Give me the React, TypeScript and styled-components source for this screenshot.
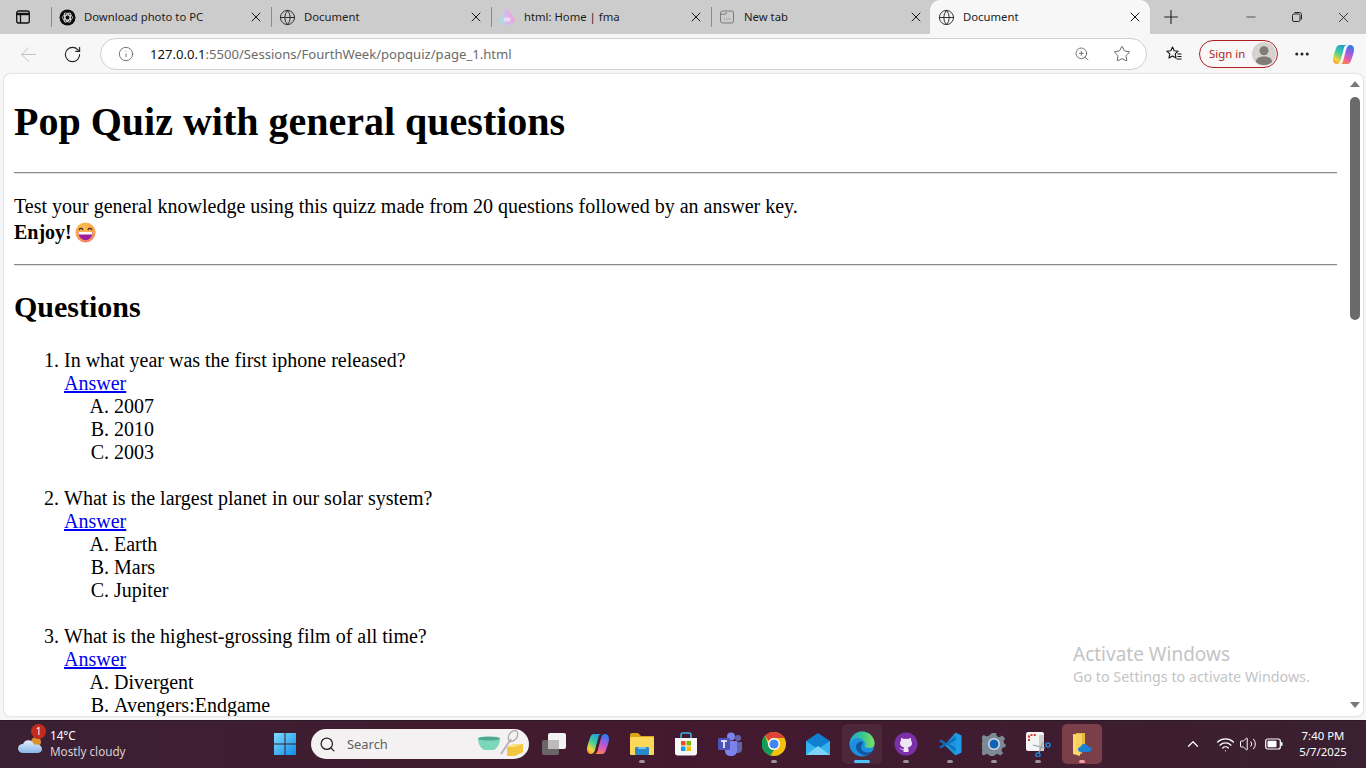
import { ReactNode } from "react";
import styled, { createGlobalStyle } from "styled-components";
import { ArrowLeft, ChevronUp, Globe, Minus, Plus, RotateCw, Search, Star, Volume2, Wifi, X, ZoomIn, Info, Ellipsis } from "lucide-react";

const GlobalStyle = createGlobalStyle`
  html, body { margin: 0; padding: 0; height: 100%; overflow: hidden; }
  body { font-family: "Noto Sans", "Open Sans", sans-serif; }
`;

const Shell = styled.div`
  width: 1366px;
  height: 768px;
  display: flex;
  flex-direction: column;
  overflow: hidden;
  background: #f7f7f7;
`;

const TabStrip = styled.div`
  height: 34px;
  flex: none;
  display: flex;
  align-items: stretch;
  background: #cccccc;
`;

const SidebarButton = styled.div`
  width: 51px;
  display: flex;
  align-items: center;
  justify-content: center;
  padding-right: 5px;
  box-sizing: border-box;
`;

const Tab = styled.div<{ $active?: boolean }>`
  width: 220px;
  height: 34px;
  box-sizing: border-box;
  position: relative;
  display: flex;
  align-items: center;
  padding: 0 7px 0 7px;
  gap: 8px;
  font-size: 11.3px;
  color: #1c1c1c;
  margin-left: ${(p) => (p.$active ? "-1px" : "0")};
  background: ${(p) => (p.$active ? "#f7f7f7" : "transparent")};
  border-radius: ${(p) => (p.$active ? "10px 10px 0 0" : "0")};
  &::before {
    content: "";
    display: ${(p) => (p.$active ? "none" : "block")};
    position: absolute;
    left: 0;
    top: 7px;
    height: 20px;
    width: 1px;
    background: #8a8a8a;
  }
`;

const TabIcon = styled.span`
  width: 18px;
  height: 18px;
  flex: none;
  display: flex;
  align-items: center;
  justify-content: center;
`;

const TabTitle = styled.span`
  flex: 1;
  white-space: nowrap;
  overflow: hidden;
  margin-bottom: 2px;
`;

const TabClose = styled(X)`
  flex: none;
  color: #1a1a1a;
`;

const NewTabButton = styled.div`
  width: 42px;
  display: flex;
  align-items: center;
  justify-content: center;
`;

const WindowControls = styled.div`
  margin-left: auto;
  display: flex;
  align-items: center;
`;

const WindowButton = styled.div`
  width: 46px;
  height: 34px;
  display: flex;
  align-items: center;
  justify-content: center;
  color: #222;
`;

const Toolbar = styled.div`
  height: 40px;
  flex: none;
  display: flex;
  align-items: center;
  background: #f7f7f7;
`;

const ToolButton = styled.div<{ $w: number }>`
  width: ${(p) => p.$w}px;
  flex: none;
  display: flex;
  align-items: center;
  justify-content: center;
`;

const AddressBar = styled.div`
  width: 1047px;
  height: 32px;
  box-sizing: border-box;
  flex: none;
  display: flex;
  align-items: center;
  background: #fff;
  border: 1px solid #cfcfcf;
  border-radius: 16px;
  padding: 0 4px 0 17px;
  margin: 0 9px 0 12px;
`;

const Url = styled.div`
  margin-left: 16px;
  flex: 1;
  font-size: 13.1px;
  color: #6b6b6b;
  white-space: nowrap;
`;

const Host = styled.span`
  color: #111;
`;

const BarAction = styled.div`
  width: 40px;
  display: flex;
  justify-content: center;
  color: #555;
`;

const SignIn = styled.div`
  width: 79px;
  height: 28px;
  box-sizing: border-box;
  flex: none;
  margin-left: 7px;
  display: flex;
  align-items: center;
  justify-content: space-between;
  padding: 0 1px 0 9px;
  border: 1px solid #b01e23;
  border-radius: 14px;
  color: #b01e23;
  font-size: 11.4px;
`;

const SignInLabel = styled.span`
  margin-bottom: 2px;
`;

const Frame = styled.div`
  flex: 1;
  min-height: 0;
  padding: 0 3px 4px 4px;
`;

const Card = styled.div`
  position: relative;
  height: 100%;
  display: flex;
  overflow: hidden;
  background: #fff;
  border-radius: 6px;
  box-shadow: 0 0 2px rgba(0, 0, 0, 0.28);
`;

const Page = styled.main`
  flex: 1;
  min-width: 0;
  overflow: hidden;
  padding: 0 10px;
  font-family: "Liberation Serif", "Times New Roman", serif;
  font-size: 20px;
  line-height: 23px;
  color: #000;
`;

const Title = styled.h1`
  margin: 25px 0 27px;
  font-size: 40px;
  line-height: 46px;
  font-weight: 700;
`;

const Rule = styled.hr`
  margin: 0;
  border: none;
  border-top: 1px solid #8a8a8a;
  border-bottom: 1px solid #e2e2e2;
`;

const Intro = styled.p`
  margin: 21px 0 20px;
`;

const EnjoyLine = styled.span`
  display: block;
  margin-top: 3px;
`;

const Emoji = styled.svg`
  width: 21px;
  height: 21px;
  vertical-align: -4px;
  margin-left: 3px;
`;

const Section = styled.h2`
  margin: 24px 0 25px;
  font-size: 30px;
  line-height: 34px;
  font-weight: 700;
`;

const Questions = styled.ol`
  margin: 0;
  padding-left: 50px;
`;

const Question = styled.li`
  margin-bottom: 23px;
`;

const AnswerLink = styled.a`
  display: block;
  color: #0000ee;
  text-decoration: underline;
`;

const Options = styled.ol`
  margin: 0;
  padding-left: 50px;
  list-style-type: upper-alpha;
`;

const ScrollBar = styled.div`
  width: 16px;
  flex: none;
  position: relative;
  display: flex;
  flex-direction: column;
  align-items: center;
  justify-content: space-between;
  padding: 7px 0 8px;
  box-sizing: border-box;
`;

const ScrollThumb = styled.div`
  position: absolute;
  top: 23px;
  left: 3px;
  width: 10px;
  height: 223px;
  border-radius: 5px;
  background: #6a6a6a;
`;

const ScrollArrow = styled.div<{ $down?: boolean }>`
  width: 0;
  height: 0;
  border-left: 5px solid transparent;
  border-right: 5px solid transparent;
  border-bottom: ${(p) => (p.$down ? "0" : "6px solid #7a7a7a")};
  border-top: ${(p) => (p.$down ? "6px solid #7a7a7a" : "0")};
`;

const Watermark = styled.div`
  position: absolute;
  left: 1069px;
  top: 567px;
  color: #c4c4c4;
  font-size: 14.3px;
  line-height: 20px;
  white-space: nowrap;
`;

const WatermarkTitle = styled.div`
  font-size: 19px;
  line-height: 26px;
`;

const Taskbar = styled.footer`
  height: 48px;
  flex: none;
  display: flex;
  align-items: center;
  padding-bottom: 1px;
  background: linear-gradient(90deg, #3b2033 0%, #44192f 50%, #3a2031 100%);
  border-top: 1px solid #2c1a27;
  box-sizing: border-box;
`;

const Weather = styled.div`
  width: 263px;
  flex: none;
  display: flex;
  align-items: center;
  padding-left: 17px;
  box-sizing: border-box;
  position: relative;
`;

const Badge = styled.span`
  position: absolute;
  left: 31px;
  top: -3px;
  width: 15px;
  height: 15px;
  border-radius: 50%;
  background: #c42b1c;
  color: #fff;
  font-size: 10px;
  line-height: 15px;
  text-align: center;
`;

const WeatherText = styled.div`
  margin: 0 0 2px 7px;
  font-size: 11.7px;
  line-height: 16px;
  color: #d8d0d5;
`;

const Temperature = styled.div`
  color: #fff;
`;

const TaskIcon = styled.div<{ $open?: "idle" | "focus" | "active" }>`
  width: 40px;
  height: 40px;
  margin: 0 2px;
  flex: none;
  position: relative;
  display: flex;
  align-items: center;
  justify-content: center;
  border-radius: 5px;
  background: ${(p) => (p.$open === "active" ? "#7a3f48" : p.$open === "focus" ? "rgba(255,255,255,0.06)" : "transparent")};
  &::after {
    content: "";
    display: ${(p) => (p.$open ? "block" : "none")};
    position: absolute;
    bottom: 1px;
    left: 50%;
    height: 3px;
    border-radius: 2px;
    transform: translateX(-50%);
    width: ${(p) => (p.$open === "focus" ? "16px" : "6px")};
    background: ${(p) => (p.$open === "focus" ? "#4cc2ff" : p.$open === "active" ? "#f09aa4" : "#9a9297")};
  }
`;

const SearchBox = styled.div`
  width: 218px;
  height: 30px;
  flex: none;
  margin: 0 3px 0 4px;
  box-sizing: border-box;
  display: flex;
  align-items: center;
  gap: 11px;
  padding: 0 4px 0 8px;
  background: #f4f1f2;
  border-radius: 15px;
  color: #5f5f5f;
  font-size: 12.9px;
`;

const SearchLabel = styled.span`
  flex: 1;
`;

const Tray = styled.div`
  margin-left: auto;
  display: flex;
  align-items: center;
  color: #fff;
`;

const TrayIcon = styled.div<{ $w: number; $after?: number }>`
  width: ${(p) => p.$w}px;
  margin-right: ${(p) => p.$after ?? 0}px;
  display: flex;
  justify-content: center;
`;

const Clock = styled.div`
  width: 68px;
  margin: 0 9px 1px 0;
  text-align: center;
  font-size: 11.4px;
  line-height: 16px;
  color: #fff;
`;

const Copilot = ({ size, id }: { size: number; id: string }) => (
  <svg width={size} height={size} viewBox="0 0 24 24">
    <defs>
      <linearGradient id={`${id}L`} x1="0.7" y1="0" x2="0.2" y2="1">
        <stop offset="0" stopColor="#1f9be0" />
        <stop offset="0.45" stopColor="#3fcf9a" />
        <stop offset="0.8" stopColor="#f5d53a" />
        <stop offset="1" stopColor="#f59a3a" />
      </linearGradient>
      <linearGradient id={`${id}R`} x1="0.7" y1="0" x2="0.3" y2="1">
        <stop offset="0" stopColor="#2a7fe8" />
        <stop offset="0.4" stopColor="#a05ae0" />
        <stop offset="0.75" stopColor="#ee5fa0" />
        <stop offset="1" stopColor="#f58a3a" />
      </linearGradient>
    </defs>
    <path d="M8 2h8c-2 0-3 1-3.500 3L9 18c-.6 2-2 4-4 4-2.500 0-4-2-4-5 0-3 2-8 3-11 .7-2.500 2-4 4-4z" fill={`url(#${id}L)`} />
    <path d="M16 22H8c2 0 3-1 3.500-3L15 6c.6-2 2-4 4-4 2.500 0 4 2 4 5 0 3-2 8-3 11-.7 2.500-2 4-4 4z" fill={`url(#${id}R)`} />
  </svg>
);

const SidebarGlyph = () => (
  <svg width="16" height="16" viewBox="0 0 16 16" fill="none" stroke="#111" strokeWidth="1.3">
    <rect x="1.700" y="2" width="12.600" height="12" rx="2" />
    <path d="M1.700 5h12.600" strokeWidth="2.400" />
    <path d="M5.500 5v9" />
  </svg>
);

const GptGlyph = () => (
  <svg width="17" height="17" viewBox="0 0 17 17" fill="none">
    <circle cx="8.500" cy="8.500" r="8" fill="#0d0d0d" />
    <g stroke="#e8e8e8" strokeWidth="0.9">
      <ellipse cx="8.500" cy="8.500" rx="5" ry="2.500" />
      <ellipse cx="8.500" cy="8.500" rx="5" ry="2.500" transform="rotate(60 8.500 8.500)" />
      <ellipse cx="8.500" cy="8.500" rx="5" ry="2.500" transform="rotate(120 8.500 8.500)" />
    </g>
  </svg>
);

const FmaGlyph = () => (
  <svg width="18" height="18" viewBox="0 0 18 18">
    <defs>
      <linearGradient id="fma" x1="0" y1="0.6" x2="1" y2="0.4">
        <stop offset="0" stopColor="#9fe3e6" />
        <stop offset="0.5" stopColor="#dcb6ea" />
        <stop offset="1" stopColor="#f3a0dc" />
      </linearGradient>
    </defs>
    <path d="M9 1c1.500 0 2.500 2 3.500 4.500 1.500 2 4 4 4.500 6.500 0 3-3.500 5-8 5s-8-2-8-5c.5-2.500 3-4.500 4.500-6.500C6.500 3 7.500 1 9 1z" fill="url(#fma)" />
    <rect x="5.500" y="9.500" width="7" height="4" rx="1.500" fill="#eadcf2" />
  </svg>
);

const NewTabGlyph = () => (
  <svg width="16" height="16" viewBox="0 0 16 16" fill="none" stroke="#7c7c7c" strokeWidth="1">
    <rect x="1.500" y="2" width="13" height="12" rx="2" />
    <path d="M1.500 5.200h5l1-2.200" />
    <path d="M5 10h1M7.500 10h1M10 10h1" strokeWidth="1.200" />
  </svg>
);

const RestoreGlyph = () => (
  <svg width="12" height="12" viewBox="0 0 12 12" fill="none" stroke="#222" strokeWidth="1">
    <rect x="1.500" y="3" width="7.500" height="7.500" rx="1.500" />
    <path d="M3.500 1.500h5c1.200 0 2 .8 2 2v5" />
  </svg>
);

const FavoritesGlyph = () => (
  <svg width="18" height="18" viewBox="0 0 18 18" fill="none" stroke="#111" strokeWidth="1.100" strokeLinejoin="round">
    <path d="M7.500 2l1.700 3.700 4 .5-3 2.700.8 4-3.500-2-3.500 2 .8-4-3-2.700 4-.5z" />
    <path d="M12.500 9h4M12.500 11.500h4M11.500 14h5" />
  </svg>
);

const Avatar = () => (
  <svg width="24" height="24" viewBox="0 0 24 24">
    <circle cx="12" cy="12" r="12" fill="#d6d3ce" />
    <circle cx="12" cy="8.800" r="4.500" fill="#7f7b76" />
    <path d="M4 20c0-4 3.500-5.500 8-5.500s8 1.500 8 5.500c-2 2-5 3-8 3s-6-1-8-3z" fill="#7f7b76" />
  </svg>
);

const CloudGlyph = () => (
  <svg width="26" height="22" viewBox="0 0 26 22">
    <defs>
      <linearGradient id="cloud" x1="0" y1="0" x2="0" y2="1">
        <stop offset="0" stopColor="#e2eefb" />
        <stop offset="1" stopColor="#86b6ea" />
      </linearGradient>
    </defs>
    <circle cx="19" cy="9" r="5" fill="#d9912f" />
    <path d="M6 20c-3 0-5-2-5-4.500S3 11 6 11c1-3 4-4.500 7-3.500 2.500.8 3.500 2.500 4 4 4-.5 8 .5 8 4.500 0 2.500-2 4-5 4z" fill="url(#cloud)" />
  </svg>
);

const WinLogo = () => (
  <svg width="24" height="24" viewBox="0 0 24 24">
    <defs>
      <linearGradient id="win" x1="0" y1="0" x2="1" y2="1">
        <stop offset="0" stopColor="#7fdcff" />
        <stop offset="1" stopColor="#0f8be8" />
      </linearGradient>
    </defs>
    <path d="M1 1h10.500v10.500H1zM12.500 1H23v10.500H12.500zM1 12.500h10.500V23H1zM12.500 12.500H23V23H12.500z" fill="url(#win)" />
  </svg>
);

const SearchArt = () => (
  <svg width="48" height="30" viewBox="0 0 48 30">
    <path d="M1 9h22c0 6-3 11-6.500 12h-9C4 20 1 15 1 9z" fill="#7cd6b8" />
    <ellipse cx="12" cy="9.500" rx="11" ry="2" fill="#4fa98f" />
    <path d="M24 25L34 10" stroke="#b9b4b8" strokeWidth="2" />
    <ellipse cx="36" cy="7" rx="4" ry="6" transform="rotate(35 36 7)" fill="none" stroke="#a9a4a8" strokeWidth="1.200" />
    <path d="M30 18l8-3h8v8l-8 4h-8z" fill="#f4c53f" />
    <path d="M30 18l8-3h8l-8 3z" fill="#fbe078" />
  </svg>
);

const TaskViewGlyph = () => (
  <svg width="26" height="24" viewBox="0 0 26 24">
    <rect x="1" y="8" width="17" height="15" rx="2" fill="#6a6568" />
    <rect x="7" y="1" width="18" height="16" rx="2" fill="#f2f2f2" />
    <rect x="7" y="8" width="11" height="9" fill="#bdbabb" />
  </svg>
);

const FolderGlyph = () => (
  <svg width="24" height="22" viewBox="0 0 24 22">
    <path d="M0 2c0-1 .7-2 2-2h6l3 3h13v4H0z" fill="#d9a514" />
    <rect x="0" y="4" width="24" height="18" rx="1" fill="#fbd85a" />
    <rect x="5" y="14" width="14" height="8" rx="1" fill="#2b88c8" />
    <rect x="8" y="14" width="8" height="2" fill="#6fc0ea" />
  </svg>
);

const StoreGlyph = () => (
  <svg width="24" height="24" viewBox="0 0 24 24">
    <path d="M7 6V3c0-1 .6-2 2-2h6c1.400 0 2 1 2 2v3" fill="none" stroke="#35b6e8" strokeWidth="1.600" />
    <path d="M1 6h22v15c0 1.500-1 2.500-2.500 2.500h-17C2 23.500 1 22.500 1 21z" fill="#f7f7f7" />
    <rect x="7" y="9" width="4.500" height="4.500" fill="#f25022" />
    <rect x="12.500" y="9" width="4.500" height="4.500" fill="#7fba00" />
    <rect x="7" y="14.500" width="4.500" height="4.500" fill="#00a4ef" />
    <rect x="12.500" y="14.500" width="4.500" height="4.500" fill="#ffb900" />
  </svg>
);

const TeamsGlyph = () => (
  <svg width="26" height="24" viewBox="0 0 26 24">
    <circle cx="21" cy="6" r="3" fill="#6264a7" />
    <path d="M17 10h8v7c0 2.500-1.500 4-4 4s-4-1.500-4-4z" fill="#6264a7" />
    <circle cx="14" cy="4.500" r="4" fill="#7b83eb" />
    <path d="M8 9h12v10c0 3-2.500 5-6 5s-6-2-6-5z" fill="#7b83eb" />
    <rect x="1" y="6" width="12" height="12" rx="1.500" fill="#4b53bc" />
    <path d="M4 9h6M7 9v7" stroke="#fff" strokeWidth="1.600" />
  </svg>
);

const ChromeGlyph = () => (
  <svg width="24" height="24" viewBox="0 0 24 24">
    <circle cx="12" cy="12" r="12" fill="#f4c20d" />
    <path d="M12 0a12 12 0 0 1 10.400 6H12a6 6 0 0 0-5.200 3L3 3.600A12 12 0 0 1 12 0z" fill="#db4437" />
    <path d="M3 3.600L6.800 15a6 6 0 0 0 5.200 3l-3.700 5.400A12 12 0 0 1 3 3.600z" fill="#0f9d58" />
    <circle cx="12" cy="12" r="6" fill="#fff" />
    <circle cx="12" cy="12" r="4.600" fill="#4285f4" />
  </svg>
);

const MailGlyph = () => (
  <svg width="24" height="22" viewBox="0 0 24 22">
    <path d="M0 8L12 0l12 8v14H0z" fill="#0f7fd0" />
    <path d="M0 8l12 8 12-8v14H0z" fill="#33b2ee" />
    <path d="M0 22l12-9 12 9z" fill="#7cd3f7" />
  </svg>
);

const EdgeGlyph = () => (
  <svg width="26" height="26" viewBox="0 0 26 26">
    <defs>
      <linearGradient id="edgeA" x1="0" y1="0.5" x2="1" y2="0.5">
        <stop offset="0" stopColor="#2aa7d8" />
        <stop offset="0.5" stopColor="#35c48f" />
        <stop offset="1" stopColor="#7fe05f" />
      </linearGradient>
    </defs>
    <circle cx="13" cy="13" r="12.500" fill="#1b8fe0" />
    <path d="M13 .5C20 .5 25.500 6 25.500 12.500c0 3-2.500 4.500-5 4.500-3 0-5-1-5-2 1-1 1-2.500 0-4C13 7 8 6 5 8 3 9.500 1.500 11.500 .6 14 .6 7 6 .5 13 .5z" fill="url(#edgeA)" />
    <path d="M14 11c-3-1-7 1-7 5 0 4 4 7 8 8.500 3 0 6-1.500 8-4-4 2-9 1-10.500-2-1-2 0-5 1.500-7.500z" fill="#13559e" />
  </svg>
);

const GithubGlyph = () => (
  <svg width="24" height="24" viewBox="0 0 24 24">
    <circle cx="12" cy="12" r="11.500" fill="#7b2fa8" />
    <path d="M9.500 20v-2.500c-2.500.5-3.500-.5-4-2 1 .5 1.500 1.500 2.500 1.500h1.500c.2-.8.5-1.300 1-1.600C7.500 15 6 13.500 6 11c0-1 .4-1.900 1-2.600-.2-.8-.1-1.700.2-2.400 1 0 1.800.5 2.500 1a8 8 0 0 1 4.600 0c.7-.5 1.500-1 2.500-1 .3.700.4 1.600.2 2.400.6.700 1 1.600 1 2.600 0 2.500-1.500 4-4.500 4.400.6.400 1 1.200 1 2.100V20z" fill="#efe6f5" />
  </svg>
);

const VscodeGlyph = () => (
  <svg width="24" height="24" viewBox="0 0 24 24">
    <path d="M17.500 0.500L23.500 3.500v17l-6 3L7 13.500z" fill="#1f9ce6" />
    <path d="M17.500 0.500V23.500L5 12z" fill="#0f7cc6" opacity="0.25" />
    <path d="M3 7.500L1 9l4.500 3L1 15l2 1.500L9 12.500l8.500 7V16L11 12l6.500-4V4.500L9 11.500z" fill="#0b70b8" />
  </svg>
);

const SettingsGlyph = () => (
  <svg width="24" height="24" viewBox="0 0 24 24">
    <path d="M10 1h4l.8 3.200 2.600 1.100 2.900-1.700 2.800 2.800-1.700 2.900 1.100 2.600L23.500 12v3l-3 .8-1.100 2.600 1.700 2.900-2.800 2.200-2.900-1.700-2.600 1.100-.8 1.100h-4l-.8-1.100-2.600-1.100-2.900 1.700-2.800-2.200 1.700-2.900-1.100-2.600-3-.8v-3l3-.8 1.100-2.600-1.700-2.900 2.800-2.800 2.900 1.700 2.600-1.100z" fill="#7d8a96" />
    <circle cx="12" cy="12" r="6" fill="#d6dde3" />
    <circle cx="12" cy="12" r="4.500" fill="#0f62b8" />
  </svg>
);

const SnipGlyph = () => (
  <svg width="26" height="26" viewBox="0 0 26 26">
    <rect x="1" y="1" width="18" height="19" rx="2" fill="#f4f4f4" />
    <path d="M4 10V5.500C4 4.500 4.500 4 5.500 4H11" fill="none" stroke="#d83b2f" strokeWidth="2" strokeDasharray="2 1.300" />
    <rect x="14" y="4" width="5" height="16" fill="#cfcfcf" />
    <path d="M8 14l12 3M14 22l4-11" stroke="#9ea4a8" strokeWidth="1.200" />
    <circle cx="23" cy="14" r="2" fill="none" stroke="#1c7fd6" strokeWidth="1.600" />
    <circle cx="13" cy="24" r="2" fill="none" stroke="#1c7fd6" strokeWidth="1.600" />
  </svg>
);

const ExplorerGlyph = () => (
  <svg width="20" height="24" viewBox="0 0 20 24">
    <path d="M1 2l7 2v20l-7-2z" fill="#f6d25e" />
    <rect x="4" y="1" width="9" height="18" fill="#e7b93a" />
    <path d="M1 2l9 0v20H1z" fill="#f9dc72" opacity="0.7" />
    <path d="M9 20c-2 0-3-1-3-2.500 0-1.300 1-2.300 2.300-2.500C9 13 10.500 12 12.500 12c1.700 0 3 1 3.500 2.500 2 0 3.500 1 3.500 2.800 0 1.700-1.200 2.700-3 2.700z" fill="#1c7fd6" />
  </svg>
);

const BatteryGlyph = () => (
  <svg width="18" height="12" viewBox="0 0 18 12" fill="none">
    <rect x="0.700" y="1" width="14.600" height="10" rx="2" stroke="#fff" strokeWidth="1.200" />
    <rect x="2.500" y="2.800" width="9" height="6.400" rx="0.800" fill="#fff" />
    <rect x="16" y="4" width="1.500" height="4" rx="0.700" fill="#fff" />
  </svg>
);

const LaughEmoji = () => (
  <Emoji viewBox="0 0 22 22" role="img" aria-label="grinning face">
    <defs>
      <radialGradient id="face" cx="0.45" cy="0.3" r="0.8">
        <stop offset="0" stopColor="#fcc24c" />
        <stop offset="0.65" stopColor="#f8a04e" />
        <stop offset="1" stopColor="#ef6f7c" />
      </radialGradient>
    </defs>
    <circle cx="11" cy="11" r="10.500" fill="url(#face)" />
    <path d="M4.500 8c.8-1.600 3-1.600 3.800 0M13.700 8c.8-1.600 3-1.600 3.800 0" fill="none" stroke="#4a2b2b" strokeWidth="1.300" strokeLinecap="round" />
    <path d="M3.500 10.500h15c0 5-3.300 8.500-7.500 8.500s-7.500-3.500-7.500-8.500z" fill="#a01f9c" />
    <path d="M3.700 10.500h14.600c0 1-.2 1.800-.4 2.500H4.100c-.2-.7-.4-1.500-.4-2.500z" fill="#fff" />
  </Emoji>
);

interface TabData {
  title: string;
  icon: ReactNode;
  active?: boolean;
}

const tabs: TabData[] = [
  { title: "Download photo to PC", icon: <GptGlyph /> },
  { title: "Document", icon: <Globe size={17} strokeWidth={1.3} color="#222" /> },
  { title: "html: Home | fma", icon: <FmaGlyph /> },
  { title: "New tab", icon: <NewTabGlyph /> },
  { title: "Document", icon: <Globe size={17} strokeWidth={1.3} color="#222" />, active: true },
];

const quiz = [
  { q: "In what year was the first iphone released?", options: ["2007", "2010", "2003"] },
  { q: "What is the largest planet in our solar system?", options: ["Earth", "Mars", "Jupiter"] },
  { q: "What is the highest-grossing film of all time?", options: ["Divergent", "Avengers:Endgame"] },
];

const taskIcons: { icon: ReactNode; open?: "idle" | "focus" | "active" }[] = [
  { icon: <TaskViewGlyph /> },
  { icon: <Copilot size={24} id="cpTask" /> },
  { icon: <FolderGlyph />, open: "idle" },
  { icon: <StoreGlyph /> },
  { icon: <TeamsGlyph /> },
  { icon: <ChromeGlyph />, open: "idle" },
  { icon: <MailGlyph /> },
  { icon: <EdgeGlyph />, open: "focus" },
  { icon: <GithubGlyph />, open: "idle" },
  { icon: <VscodeGlyph />, open: "idle" },
  { icon: <SettingsGlyph />, open: "idle" },
  { icon: <SnipGlyph />, open: "idle" },
  { icon: <ExplorerGlyph />, open: "active" },
];

export default function App() {
  return (
    <Shell>
      <GlobalStyle />
      <TabStrip>
        <SidebarButton>
          <SidebarGlyph />
        </SidebarButton>
        {tabs.map((tab, i) => (
          <Tab key={i} $active={tab.active}>
            <TabIcon>{tab.icon}</TabIcon>
            <TabTitle>{tab.title}</TabTitle>
            <TabClose size={16} strokeWidth={1.5} />
          </Tab>
        ))}
        <NewTabButton>
          <Plus size={22} strokeWidth={1.2} color="#222" />
        </NewTabButton>
        <WindowControls>
          <WindowButton>
            <Minus size={14} strokeWidth={1.2} />
          </WindowButton>
          <WindowButton>
            <RestoreGlyph />
          </WindowButton>
          <WindowButton>
            <X size={17} strokeWidth={1.2} />
          </WindowButton>
        </WindowControls>
      </TabStrip>

      <Toolbar>
        <ToolButton $w={56}>
          <ArrowLeft size={23} strokeWidth={1} color="#bdbdbd" />
        </ToolButton>
        <ToolButton $w={32}>
          <RotateCw size={19} strokeWidth={1.4} color="#222" />
        </ToolButton>
        <AddressBar>
          <Info size={16} strokeWidth={1.2} color="#555" />
          <Url>
            <Host>127.0.0.1</Host>:5500/Sessions/FourthWeek/popquiz/page_1.html
          </Url>
          <BarAction>
            <ZoomIn size={16} strokeWidth={1.2} />
          </BarAction>
          <BarAction>
            <Star size={18} strokeWidth={1.2} />
          </BarAction>
        </AddressBar>
        <ToolButton $w={36}>
          <FavoritesGlyph />
        </ToolButton>
        <SignIn>
          <SignInLabel>Sign in</SignInLabel>
          <Avatar />
        </SignIn>
        <ToolButton $w={48}>
          <Ellipsis size={18} strokeWidth={2} color="#222" />
        </ToolButton>
        <ToolButton $w={34}>
          <Copilot size={23} id="cpBar" />
        </ToolButton>
      </Toolbar>

      <Frame>
        <Card>
          <Page>
            <Title>Pop Quiz with general questions</Title>
            <Rule />
            <Intro>
              Test your general knowledge using this quizz made from 20 questions followed by an answer key.
              <EnjoyLine>
                <strong>Enjoy!</strong>
                <LaughEmoji />
              </EnjoyLine>
            </Intro>
            <Rule />
            <Section>Questions</Section>
            <Questions>
              {quiz.map((item) => (
                <Question key={item.q}>
                  {item.q}
                  <AnswerLink href="#">Answer</AnswerLink>
                  <Options>
                    {item.options.map((option) => (
                      <li key={option}>{option}</li>
                    ))}
                  </Options>
                </Question>
              ))}
            </Questions>
          </Page>
          <ScrollBar>
            <ScrollArrow />
            <ScrollThumb />
            <ScrollArrow $down />
          </ScrollBar>
          <Watermark>
            <WatermarkTitle>Activate Windows</WatermarkTitle>
            Go to Settings to activate Windows.
          </Watermark>
        </Card>
      </Frame>

      <Taskbar>
        <Weather>
          <CloudGlyph />
          <Badge>1</Badge>
          <WeatherText>
            <Temperature>14°C</Temperature>
            Mostly cloudy
          </WeatherText>
        </Weather>
        <TaskIcon>
          <WinLogo />
        </TaskIcon>
        <SearchBox>
          <Search size={17} strokeWidth={1.8} color="#222" />
          <SearchLabel>Search</SearchLabel>
          <SearchArt />
        </SearchBox>
        {taskIcons.map((item, i) => (
          <TaskIcon key={i} $open={item.open}>
            {item.icon}
          </TaskIcon>
        ))}
        <Tray>
          <TrayIcon $w={24} $after={8}>
            <ChevronUp size={18} strokeWidth={1.6} />
          </TrayIcon>
          <TrayIcon $w={24}>
            <Wifi size={19} strokeWidth={1.6} />
          </TrayIcon>
          <TrayIcon $w={22}>
            <Volume2 size={18} strokeWidth={1.3} />
          </TrayIcon>
          <TrayIcon $w={30}>
            <BatteryGlyph />
          </TrayIcon>
          <Clock>
            7:40 PM
            <br />
            5/7/2025
          </Clock>
        </Tray>
      </Taskbar>
    </Shell>
  );
}
